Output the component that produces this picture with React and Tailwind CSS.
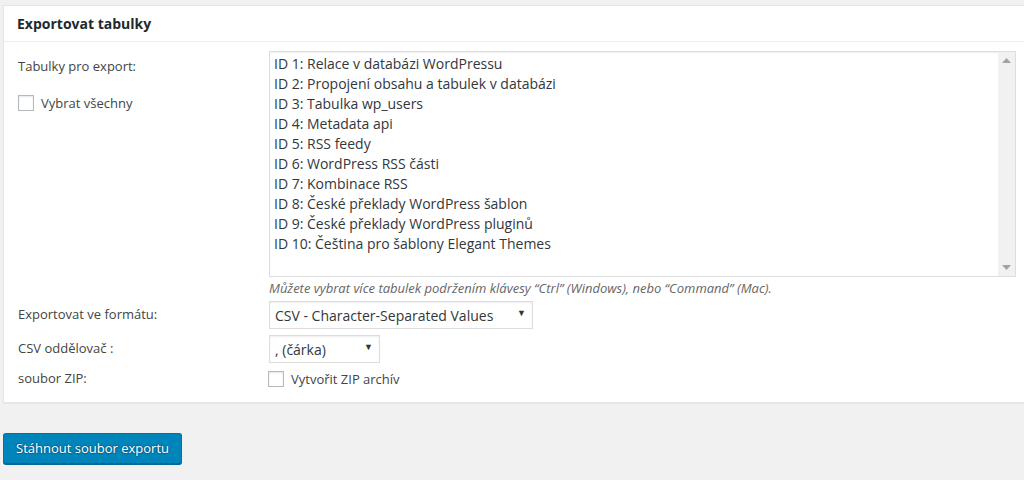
import React from 'react';

const tables = [
  'ID 1: Relace v databázi WordPressu',
  'ID 2: Propojení obsahu a tabulek v databázi',
  'ID 3: Tabulka wp_users',
  'ID 4: Metadata api',
  'ID 5: RSS feedy',
  'ID 6: WordPress RSS části',
  'ID 7: Kombinace RSS',
  'ID 8: České překlady WordPress šablon',
  'ID 9: České překlady WordPress pluginů',
  'ID 10: Čeština pro šablony Elegant Themes',
];

function Checkbox() {
  return (
    <span className="inline-block w-4 h-4 border border-[#b4b9be] bg-white shadow-[inset_0_1px_2px_rgba(0,0,0,0.1)] shrink-0"></span>
  );
}

function FakeSelect({ value, width }) {
  return (
    <div className={`${width} h-[28px] flex items-center justify-between border border-[#ddd] bg-white shadow-[inset_0_1px_2px_rgba(0,0,0,0.07)] pl-[5px] pr-[6px] text-[14px] text-[#32373c]`}>
      <span>{value}</span>
      <span className="text-[9px] text-[#333] -mt-[4px]">▼</span>
    </div>
  );
}

export default function App() {
  return (
    <div className="min-h-screen bg-[#f1f1f1] overflow-hidden pt-[5px] font-['Open_Sans',sans-serif] text-[#444]">
      {/* Export panel */}
      <div className="ml-[3px] w-[1040px] bg-white border border-[#e5e5e5] shadow-[0_1px_1px_rgba(0,0,0,0.04)]">
        <h2 className="h-[36px] border-b border-[#eee] px-[13px] flex items-center text-[14px] font-bold text-[#23282d] leading-none">
          Exportovat tabulky
        </h2>

        <div className="pl-[14px] pt-[9px] pb-[13px] text-[13px]">
          {/* Tables */}
          <div className="flex">
            <div className="w-[251px] shrink-0 pt-[5px]">
              <div className="h-[20px] leading-[20px]">Tabulky pro export:</div>
              <div className="flex items-center gap-[7px] mt-[17px]">
                <Checkbox />
                <span className="leading-[20px]">Vybrat všechny</span>
              </div>
            </div>
            <div>
              <div className="w-[747px] h-[226px] border border-[#ddd] bg-white flex shadow-[inset_0_1px_2px_rgba(0,0,0,0.07)]">
                <div className="flex-1 pl-[4px] pt-[2px] text-[14px] text-[#32373c]">
                  {tables.map(t => (
                    <div key={t} className="h-[20px] leading-[20px] whitespace-nowrap">{t}</div>
                  ))}
                </div>
                <div className="w-[17px] bg-[#f1f1f1] flex flex-col justify-between items-center py-[6px]">
                  <svg width="9" height="5" viewBox="0 0 9 5"><path d="M0 5 L4.5 0 L9 5 Z" fill="#a3a3a3" /></svg>
                  <svg width="9" height="5" viewBox="0 0 9 5"><path d="M0 0 L4.5 5 L9 0 Z" fill="#a3a3a3" /></svg>
                </div>
              </div>
              <p className="italic text-[#666] text-[13px] leading-[20px] mt-[1px] whitespace-nowrap">
                Můžete vybrat více tabulek podržením klávesy “Ctrl” (Windows), nebo “Command” (Mac).
              </p>
            </div>
          </div>

          {/* Format */}
          <div className="flex items-center mt-[3px]">
            <div className="w-[251px] shrink-0">Exportovat ve formátu:</div>
            <FakeSelect value="CSV - Character-Separated Values" width="w-[264px]" />
          </div>

          {/* Delimiter */}
          <div className="flex items-center mt-[6px]">
            <div className="w-[251px] shrink-0">CSV oddělovač :</div>
            <FakeSelect value=", (čárka)" width="w-[111px]" />
          </div>

          {/* ZIP */}
          <div className="flex items-center mt-[6px]">
            <div className="w-[250px] shrink-0">soubor ZIP:</div>
            <div className="flex items-center gap-[7px]">
              <Checkbox />
              <span className="leading-[20px]">Vytvořit ZIP archív</span>
            </div>
          </div>
        </div>
      </div>

      <div className="pl-[3px] mt-[30px]">
        <button className="h-[31px] px-[12px] rounded-[3px] bg-[#0085ba] border border-[#0073aa] border-b-[#006799] shadow-[0_1px_0_#006799] text-white text-[13px] [text-shadow:0_-1px_1px_#006799,1px_0_1px_#006799,0_1px_1px_#006799,-1px_0_1px_#006799]">
          Stáhnout soubor exportu
        </button>
      </div>
    </div>
  );
}
